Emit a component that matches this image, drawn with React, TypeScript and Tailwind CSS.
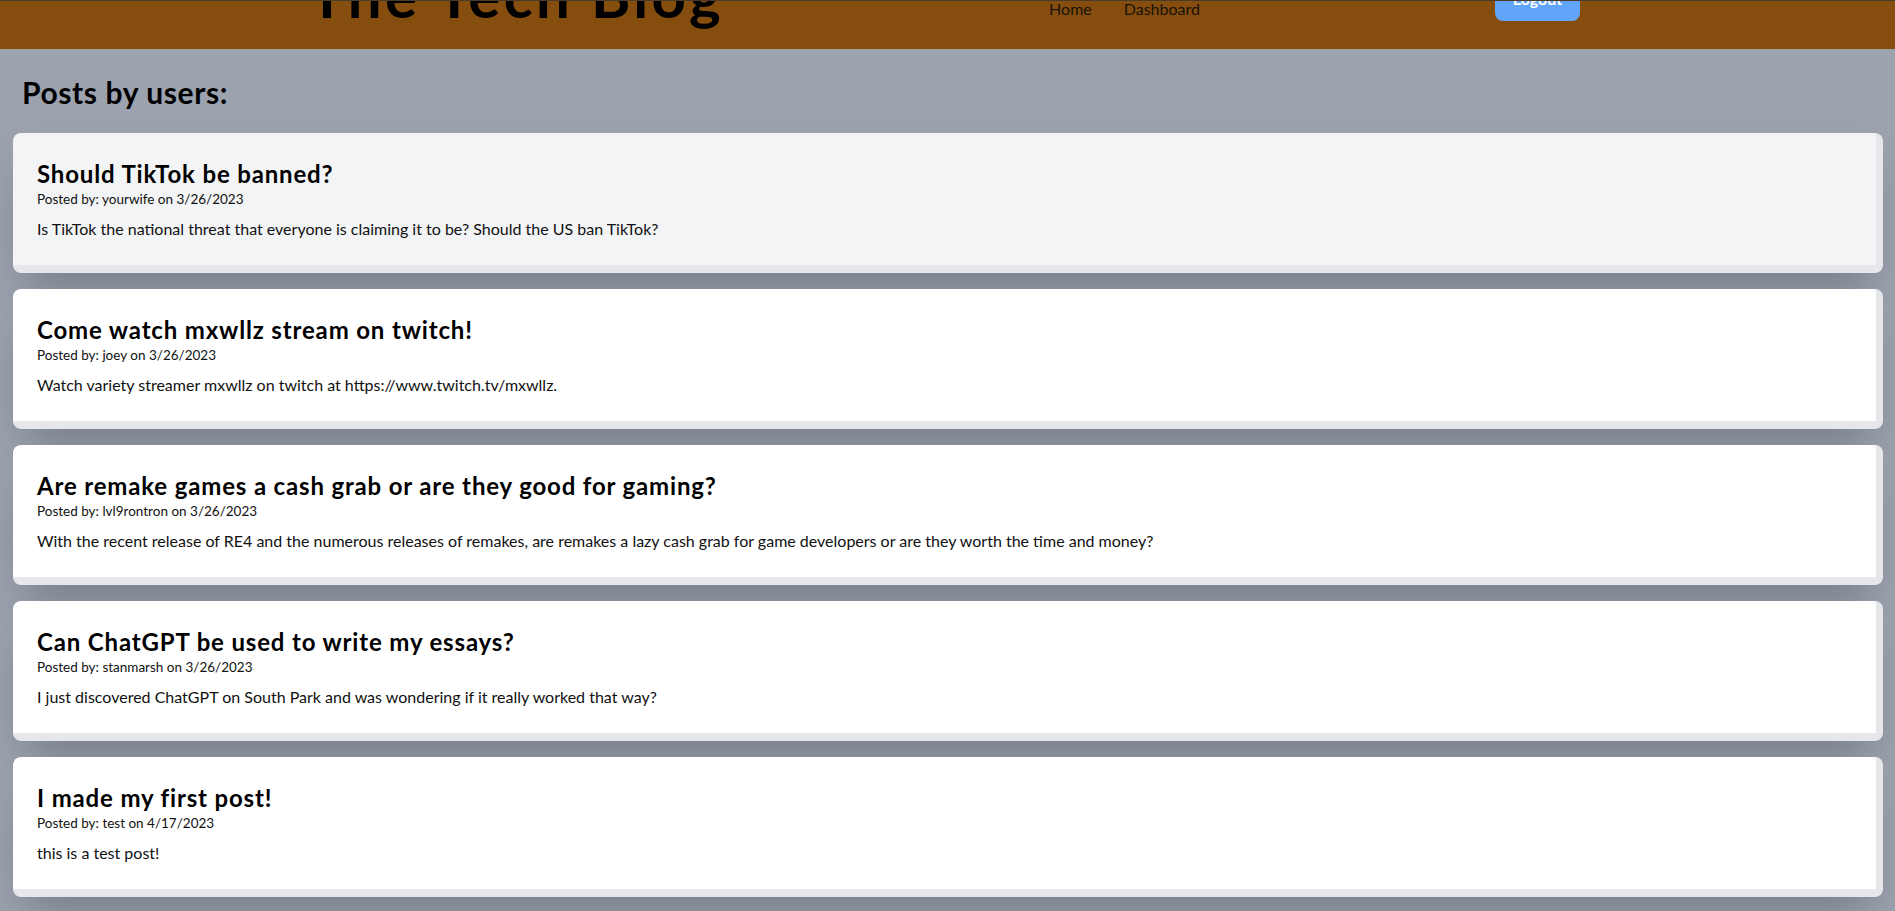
import React from "react";

const posts = [
  {
    title: "Should TikTok be banned?",
    author: "yourwife",
    date: "3/26/2023",
    body: "Is TikTok the national threat that everyone is claiming it to be? Should the US ban TikTok?",
    active: true,
  },
  {
    title: "Come watch mxwllz stream on twitch!",
    author: "joey",
    date: "3/26/2023",
    body: "Watch variety streamer mxwllz on twitch at https://www.twitch.tv/mxwllz.",
  },
  {
    title: "Are remake games a cash grab or are they good for gaming?",
    author: "lvl9rontron",
    date: "3/26/2023",
    body: "With the recent release of RE4 and the numerous releases of remakes, are remakes a lazy cash grab for game developers or are they worth the time and money?",
  },
  {
    title: "Can ChatGPT be used to write my essays?",
    author: "stanmarsh",
    date: "3/26/2023",
    body: "I just discovered ChatGPT on South Park and was wondering if it really worked that way?",
  },
  {
    title: "I made my first post!",
    author: "test",
    date: "4/17/2023",
    body: "this is a test post!",
  },
];

export default function App() {
  return (
    <div
      className="min-h-[911px] bg-[#9ca3af] text-black"
      style={{ fontFamily: "Lato, 'Open Sans', sans-serif" }}
    >
      <header className="h-[49px] overflow-hidden border-t border-[#4a3b2a] bg-[#854d0e]">
        <div className="flex items-start">
          <h1 className="ml-[309px] -mt-[36px] whitespace-nowrap text-[60px] font-bold leading-none tracking-[0.055em] text-black">
            The Tech Blog
          </h1>
          <nav className="ml-auto -mt-[4px] flex gap-8 text-base leading-6 text-[#1a1208]">
            <a>Home</a>
            <a>Dashboard</a>
          </nav>
          <button className="ml-[295px] mr-[315px] -mt-[24px] w-[85px] rounded-lg bg-[#60a5fa] py-2.5 text-base font-bold leading-6 text-white">
            Logout
          </button>
        </div>
      </header>

      <main className="pl-[13px] pr-3 pb-6">
        <h2 className="pl-[9px] pt-[25px] pb-[23px] text-3xl font-bold leading-9 tracking-[0.02em]">
          Posts by users:
        </h2>
        <div className="flex flex-col gap-4">
          {posts.map((p) => (
            <div
              key={p.title}
              className={`rounded-lg border-b-8 border-r-[7px] border-[#e5e7eb] px-6 pt-[26px] pb-6 shadow-2xl ${
                p.active ? "bg-[#f3f4f6]" : "bg-white"
              }`}
            >
              <h3 className="text-2xl font-bold leading-[30px] tracking-[0.035em]">{p.title}</h3>
              <p className="text-[13.5px] leading-5 text-[#111]">
                Posted by: {p.author} on {p.date}
              </p>
              <p className="mt-2 text-base leading-6 text-[#111]">{p.body}</p>
            </div>
          ))}
        </div>
      </main>
    </div>
  );
}
